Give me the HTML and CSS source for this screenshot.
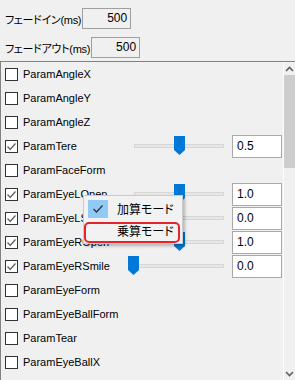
FILE: index.html
```html
<!DOCTYPE html>
<html lang="ja">
<head>
    <meta charset="UTF-8">
    <title>Param List</title>
    <link rel="stylesheet" href="styles.css">
</head>
<body>
    <div class="settings">
        <div class="setting">
            <span class="setting-label">フェードイン(ms)</span>
            <span class="num-box">500</span>
        </div>
        <div class="setting">
            <span class="setting-label">フェードアウト(ms)</span>
            <span class="num-box">500</span>
        </div>
    </div>

    <div class="panel">
        <div class="rows">
            <div class="row"><span class="check"></span><span class="name">ParamAngleX</span></div>
            <div class="row"><span class="check"></span><span class="name">ParamAngleY</span></div>
            <div class="row"><span class="check"></span><span class="name">ParamAngleZ</span></div>
            <div class="row">
                <span class="check on"><svg width="11" height="11" viewBox="0 0 11 11"><path d="M1.5 5.5 L4.2 8.3 L9.5 2.5" fill="none" stroke="#555" stroke-width="1.2"/></svg></span>
                <span class="name">ParamTere</span>
                <div class="slider"><div class="track"></div><svg class="thumb" style="left:46px" width="11" height="19" viewBox="0 0 11 19"><path d="M0 0 H11 V14 L5.5 19 L0 14 Z" fill="#0078d7"/></svg></div>
                <span class="value">0.5</span>
            </div>
            <div class="row"><span class="check"></span><span class="name">ParamFaceForm</span></div>
            <div class="row">
                <span class="check on"><svg width="11" height="11" viewBox="0 0 11 11"><path d="M1.5 5.5 L4.2 8.3 L9.5 2.5" fill="none" stroke="#555" stroke-width="1.2"/></svg></span>
                <span class="name">ParamEyeLOpen</span>
                <div class="slider"><div class="track"></div><svg class="thumb" style="left:46px" width="11" height="19" viewBox="0 0 11 19"><path d="M0 0 H11 V14 L5.5 19 L0 14 Z" fill="#0078d7"/></svg></div>
                <span class="value">1.0</span>
            </div>
            <div class="row">
                <span class="check on"><svg width="11" height="11" viewBox="0 0 11 11"><path d="M1.5 5.5 L4.2 8.3 L9.5 2.5" fill="none" stroke="#555" stroke-width="1.2"/></svg></span>
                <span class="name">ParamEyeLSmile</span>
                <div class="slider"><div class="track"></div><svg class="thumb" style="left:0px" width="11" height="19" viewBox="0 0 11 19"><path d="M0 0 H11 V14 L5.5 19 L0 14 Z" fill="#0078d7"/></svg></div>
                <span class="value">0.0</span>
            </div>
            <div class="row">
                <span class="check on"><svg width="11" height="11" viewBox="0 0 11 11"><path d="M1.5 5.5 L4.2 8.3 L9.5 2.5" fill="none" stroke="#555" stroke-width="1.2"/></svg></span>
                <span class="name">ParamEyeROpen</span>
                <div class="slider"><div class="track"></div><svg class="thumb" style="left:46px" width="11" height="19" viewBox="0 0 11 19"><path d="M0 0 H11 V14 L5.5 19 L0 14 Z" fill="#0078d7"/></svg></div>
                <span class="value">1.0</span>
            </div>
            <div class="row">
                <span class="check on"><svg width="11" height="11" viewBox="0 0 11 11"><path d="M1.5 5.5 L4.2 8.3 L9.5 2.5" fill="none" stroke="#555" stroke-width="1.2"/></svg></span>
                <span class="name">ParamEyeRSmile</span>
                <div class="slider"><div class="track"></div><svg class="thumb" style="left:0px" width="11" height="19" viewBox="0 0 11 19"><path d="M0 0 H11 V14 L5.5 19 L0 14 Z" fill="#0078d7"/></svg></div>
                <span class="value">0.0</span>
            </div>
            <div class="row"><span class="check"></span><span class="name">ParamEyeForm</span></div>
            <div class="row"><span class="check"></span><span class="name">ParamEyeBallForm</span></div>
            <div class="row"><span class="check"></span><span class="name">ParamTear</span></div>
            <div class="row"><span class="check"></span><span class="name">ParamEyeBallX</span></div>
        </div>
        <div class="scrollbar">
            <svg class="arrow" width="9" height="6" viewBox="0 0 9 6"><path d="M1 5 L4.5 1.5 L8 5" fill="none" stroke="#606060" stroke-width="1.6"/></svg>
            <div class="scroll-thumb"></div>
            <div class="scroll-space"></div>
            <svg class="arrow" width="9" height="6" viewBox="0 0 9 6"><path d="M1 1 L4.5 4.5 L8 1" fill="none" stroke="#606060" stroke-width="1.6"/></svg>
        </div>
    </div>

    <div class="menu">
        <div class="menu-item">
            <span class="menu-check"><svg width="12" height="10" viewBox="0 0 12 10"><path d="M1.5 5 L4.5 8 L10.5 1.5" fill="none" stroke="#333" stroke-width="1.3"/></svg></span>
            <span class="menu-text">加算モード</span>
        </div>
        <div class="menu-item">
            <span class="menu-check blank"></span>
            <span class="menu-text">乗算モード</span>
        </div>
    </div>
    <div class="mark"></div>
</body>
</html>
```

FILE: styles.css
```css
body {
    margin: 0;
    width: 295px;
    height: 380px;
    overflow: hidden;
    background-color: #f0f0f0;
    font-family: "Liberation Sans", "Noto Sans CJK JP", sans-serif;
    font-size: 11px;
    color: #000;
    font-feature-settings: "palt";
}

.settings {
    display: flex;
    flex-direction: column;
    gap: 8px;
    padding: 8px 0 3px 5px;
}

.setting {
    display: flex;
    align-items: center;
    height: 21px;
}

.setting-label {
    font-size: 11px;
    letter-spacing: -0.3px;
}

.num-box {
    width: 44px;
    height: 19px;
    margin-left: 1px;
    padding-right: 3px;
    border: 1px solid #a0a0a0;
    background-color: #f0f0f0;
    text-align: right;
    line-height: 19px;
    font-size: 12px;
}

.panel {
    display: flex;
    border-top: 1px solid #828282;
    border-left: 1px solid #828282;
    height: 318px;
}

.rows {
    width: 282px;
    display: flex;
    flex-direction: column;
}

.row {
    display: flex;
    align-items: center;
    height: 24px;
    flex-shrink: 0;
    padding-left: 4px;
}

.check {
    width: 11px;
    height: 11px;
    border: 1px solid #333;
    background-color: #fff;
    display: flex;
}

.name {
    margin-left: 5px;
    flex: 1;
}

.slider {
    position: relative;
    width: 102px;
    height: 24px;
}

.track {
    position: absolute;
    left: 6px;
    top: 10px;
    width: 88px;
    height: 2px;
    border: 1px solid #d6d6d6;
    background-color: #e7e7e7;
}

.thumb {
    position: absolute;
    top: 2px;
}

.value {
    width: 44px;
    height: 21px;
    margin: 0 1px 0 2px;
    padding-left: 4px;
    border: 1px solid #a9a9a9;
    background-color: #fff;
    line-height: 21px;
    font-size: 12px;
}

.scrollbar {
    width: 11px;
    border-left: 1px solid #fcfcfc;
    display: flex;
    flex-direction: column;
    align-items: center;
}

.arrow {
    margin: 4px 0 3px;
    flex-shrink: 0;
}

.scroll-thumb {
    width: 11px;
    height: 93px;
    background-color: #cdcdcd;
    flex-shrink: 0;
}

.scroll-space {
    flex: 1;
}

.menu {
    position: absolute;
    left: 83px;
    top: 195px;
    width: 96px;
    padding: 3px 1px;
    border: 1px solid #cccccc;
    background-color: #f2f2f2;
    box-shadow: 2px 2px 3px rgba(0, 0, 0, 0.25);
    display: flex;
    flex-direction: column;
    gap: 3px;
}

.menu-item {
    display: flex;
    align-items: center;
    height: 19px;
}

.menu-check {
    width: 20px;
    height: 18px;
    margin-left: 3px;
    background-color: #91c9f7;
    display: flex;
    align-items: center;
    justify-content: center;
}

.menu-check.blank {
    background-color: transparent;
}

.menu-text {
    margin-left: 9px;
    font-size: 12px;
}

.mark {
    position: absolute;
    left: 84px;
    top: 222px;
    width: 92px;
    height: 17px;
    border: 2px solid #e3242b;
    border-radius: 5px;
}
```
